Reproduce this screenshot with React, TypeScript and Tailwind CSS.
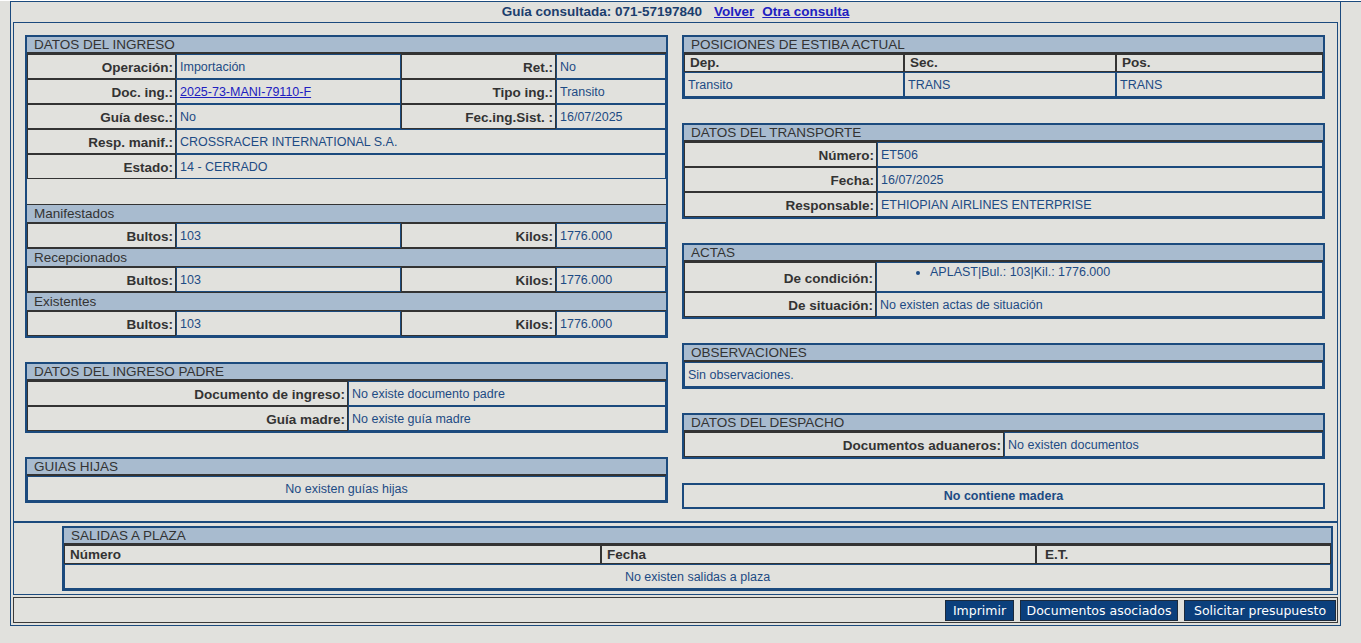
import React from "react";

// celdas tipo formulario viejo: etiqueta con borde oscuro, valor con borde azul
const Section = ({ title, children }: { title: string; children?: React.ReactNode }) => (
  <div className="border-2 border-[#1b4a7d]">
    <div className="h-[17px] border-b-2 border-[#333] bg-[#a8bbcf] pl-[7px] text-[13.5px] leading-[16px] text-[#333]">
      {title}
    </div>
    {children}
  </div>
);

const SubHeader = ({ title }: { title: string }) => (
  <div className="h-[19px] border-y border-[#333] bg-[#a8bbcf] pl-[7px] text-[13.5px] leading-[18px] text-[#333]">
    {title}
  </div>
);

const Label = ({ text, w }: { text: string; w: string }) => (
  <div className={"flex shrink-0 items-center justify-end border border-[#333] pr-[2px] pt-[4px] text-[13.5px] font-bold text-[#333] " + w}>
    {text}
  </div>
);

const Value = ({ children, w }: { children?: React.ReactNode; w?: string }) => (
  <div className={"border border-[#1b4a7d] pl-[3px] pt-[5px] text-[12.5px] leading-[15px] text-[#1d4b84] " + (w ?? "flex-1")}>
    {children}
  </div>
);

const Row = ({ children, h }: { children: React.ReactNode; h?: string }) => (
  <div className={"flex " + (h ?? "h-[25px]")}>{children}</div>
);

const KilosRow = () => (
  <Row>
    <Label text="Bultos:" w="w-[149px]" />
    <Value w="w-[225px]">103</Value>
    <Label text="Kilos:" w="w-[155px]" />
    <Value>1776.000</Value>
  </Row>
);

const App: React.FC = () => {
  return (
    <div className="min-h-screen bg-[#e1e1dd] font-['Liberation_Sans',Arial,sans-serif]">
      <div className="ml-[10px] mt-px border-t border-[#1b4a7d]" />
      <div className="ml-[10px] w-[1331px] border-x border-b border-[#1b4a7d] px-[2px] pb-[2px]">
        {/* titulo */}
        <div className="flex h-[20px] items-center justify-center text-[13.5px] font-bold text-[#1b3e6d]">
          <span>Guía consultada: 071-57197840</span>
          <a className="ml-[12px] text-[#2020c0] underline">Volver</a>
          <a className="ml-[8px] text-[#2020c0] underline">Otra consulta</a>
        </div>

        {/* contenido principal */}
        <div className="flex gap-[14px] border border-[#1b4a7d] pb-[12px] pl-[11px] pr-[12px] pt-[12px]">
          {/* columna izquierda */}
          <div className="flex w-[643px] flex-col gap-6">
            <Section title="DATOS DEL INGRESO">
              <Row>
                <Label text="Operación:" w="w-[149px]" />
                <Value w="w-[225px]">Importación</Value>
                <Label text="Ret.:" w="w-[155px]" />
                <Value>No</Value>
              </Row>
              <Row>
                <Label text="Doc. ing.:" w="w-[149px]" />
                <Value w="w-[225px]">
                  <a className="text-[#2020c0] underline">2025-73-MANI-79110-F</a>
                </Value>
                <Label text="Tipo ing.:" w="w-[155px]" />
                <Value>Transito</Value>
              </Row>
              <Row>
                <Label text="Guía desc.:" w="w-[149px]" />
                <Value w="w-[225px]">No</Value>
                <Label text="Fec.ing.Sist. :" w="w-[155px]" />
                <Value>16/07/2025</Value>
              </Row>
              <Row>
                <Label text="Resp. manif.:" w="w-[149px]" />
                <Value>CROSSRACER INTERNATIONAL S.A.</Value>
              </Row>
              <Row>
                <Label text="Estado:" w="w-[149px]" />
                <Value>14 - CERRADO</Value>
              </Row>
              <div className="h-[25px]" />
              <SubHeader title="Manifestados" />
              <KilosRow />
              <SubHeader title="Recepcionados" />
              <KilosRow />
              <SubHeader title="Existentes" />
              <KilosRow />
            </Section>

            <Section title="DATOS DEL INGRESO PADRE">
              <Row>
                <Label text="Documento de ingreso:" w="w-[321px]" />
                <Value>No existe documento padre</Value>
              </Row>
              <Row>
                <Label text="Guía madre:" w="w-[321px]" />
                <Value>No existe guía madre</Value>
              </Row>
            </Section>

            <Section title="GUIAS HIJAS">
              <Row>
                <div className="flex-1 border border-[#1b4a7d] pt-[5px] text-center text-[12.5px] leading-[15px] text-[#1d4b84]">
                  No existen guías hijas
                </div>
              </Row>
            </Section>
          </div>

          {/* columna derecha */}
          <div className="flex w-[643px] flex-col gap-6">
            <Section title="POSICIONES DE ESTIBA ACTUAL">
              <div className="flex h-[18px] text-[13.5px] font-bold text-[#333]">
                <div className="flex w-[220px] items-center border border-[#333] pl-[5px] pt-px">Dep.</div>
                <div className="flex w-[212px] items-center border border-[#333] pl-[5px] pt-px">Sec.</div>
                <div className="flex flex-1 items-center border border-[#333] pl-[5px] pt-px">Pos.</div>
              </div>
              <Row>
                <Value w="w-[220px]">Transito</Value>
                <Value w="w-[212px]">TRANS</Value>
                <Value>TRANS</Value>
              </Row>
            </Section>

            <Section title="DATOS DEL TRANSPORTE">
              <Row>
                <Label text="Número:" w="w-[193px]" />
                <Value>ET506</Value>
              </Row>
              <Row>
                <Label text="Fecha:" w="w-[193px]" />
                <Value>16/07/2025</Value>
              </Row>
              <Row>
                <Label text="Responsable:" w="w-[193px]" />
                <Value>ETHIOPIAN AIRLINES ENTERPRISE</Value>
              </Row>
            </Section>

            <Section title="ACTAS">
              <Row h="h-[30px]">
                <Label text="De condición:" w="w-[192px]" />
                <div className="flex-1 border border-[#1b4a7d] pt-[2px] text-[12.5px] leading-[15px] text-[#1d4b84]">
                  <ul className="list-disc pl-[53px]">
                    <li>APLAST|Bul.: 103|Kil.: 1776.000</li>
                  </ul>
                </div>
              </Row>
              <Row>
                <Label text="De situación:" w="w-[192px]" />
                <Value>No existen actas de situación</Value>
              </Row>
            </Section>

            <Section title="OBSERVACIONES">
              <Row>
                <Value>Sin observaciones.</Value>
              </Row>
            </Section>

            <Section title="DATOS DEL DESPACHO">
              <Row>
                <Label text="Documentos aduaneros:" w="w-[320px]" />
                <Value>No existen documentos</Value>
              </Row>
            </Section>

            <div className="flex h-[26px] items-center justify-center border-2 border-[#1b4a7d] text-[12.5px] font-bold text-[#1d4b84]">
              No contiene madera
            </div>
          </div>
        </div>

        {/* salidas a plaza */}
        <div className="border border-[#1b4a7d] pb-[3px] pl-[48px] pr-[4px] pt-[3px]">
          <Section title="SALIDAS A PLAZA">
            <div className="flex h-[19px] text-[13.5px] font-bold text-[#333]">
              <div className="flex w-[537px] items-center border border-[#333] pl-[5px] pt-[2px]">Número</div>
              <div className="flex w-[435px] items-center border border-[#333] pl-[5px] pt-[2px]">Fecha</div>
              <div className="flex flex-1 items-center border border-[#333] pl-[8px] pt-[2px]">E.T.</div>
            </div>
            <Row>
              <div className="flex-1 border border-[#1b4a7d] pt-[5px] text-center text-[12.5px] leading-[15px] text-[#1d4b84]">
                No existen salidas a plaza
              </div>
            </Row>
          </Section>
        </div>

        {/* botones */}
        <div className="mt-[2px] flex h-[26px] justify-end gap-[6px] border border-[#3a3a3a] pr-px pt-[2px]">
          {["Imprimir", "Documentos asociados", "Solicitar presupuesto"].map((b, i) => (
            <button
              key={b}
              className={
                "h-[21px] border border-[#1c2a3c] bg-[#0b3f7c] font-['DejaVu_Sans',sans-serif] text-[12.5px] leading-[18px] text-white " +
                (i === 0 ? "w-[69px]" : i === 1 ? "w-[158px]" : "w-[152px]")
              }
            >
              {b}
            </button>
          ))}
        </div>
      </div>
    </div>
  );
};

export default App;
